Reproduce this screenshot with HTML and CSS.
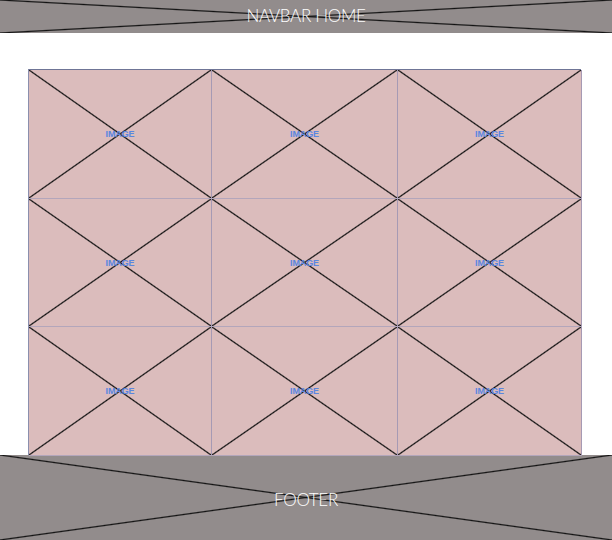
FILE: index.html
```html
<!DOCTYPE html>
<html>
<head>
<meta charset="utf-8">
<link rel="stylesheet" href="styles.css">
</head>
<body>
<header class="navbar xbox"><span class="label">NAVBAR HOME</span></header>
<main class="gallery">
  <div class="cell xbox"><span class="img-label">IMAGE</span></div>
  <div class="cell xbox"><span class="img-label">IMAGE</span></div>
  <div class="cell xbox"><span class="img-label">IMAGE</span></div>
  <div class="cell xbox"><span class="img-label">IMAGE</span></div>
  <div class="cell xbox"><span class="img-label">IMAGE</span></div>
  <div class="cell xbox"><span class="img-label">IMAGE</span></div>
  <div class="cell xbox"><span class="img-label">IMAGE</span></div>
  <div class="cell xbox"><span class="img-label">IMAGE</span></div>
  <div class="cell xbox"><span class="img-label">IMAGE</span></div>
</main>
<footer class="footer xbox"><span class="label">FOOTER</span></footer>
</body>
</html>
```
FILE: styles.css
```css
html, body {
  margin: 0;
  padding: 0;
  background: #ffffff;
  width: 612px;
  height: 540px;
  overflow: hidden;
}
body {
  font-family: Lato, "Open Sans", sans-serif;
}
.xbox {
  background-image:
    linear-gradient(to top right, transparent calc(50% - 1.2px), #111 50%, transparent calc(50% + 1.2px)),
    linear-gradient(to bottom right, transparent calc(50% - 1.2px), #111 50%, transparent calc(50% + 1.2px));
  display: flex;
  align-items: center;
  justify-content: center;
}
.navbar {
  height: 33px;
  background-color: #928c8c;
}
.label {
  color: #ffffff;
  font-weight: 300;
  font-size: 17px;
  letter-spacing: -0.3px;
}
.navbar .label {
  margin-top: -2px;
}
.gallery {
  margin: 36px 0 0 28px;
  width: 553px;
  height: 386px;
  display: grid;
  grid-template-columns: 183px 186px 184px;
  grid-template-rows: 129px 128px 129px;
  box-sizing: border-box;
  border-top: 1px solid #6f7596;
  border-left: 1px solid #8a8fae;
}
.cell {
  background-color: #dbbcbc;
  border-right: 1px solid #a69ab4;
  border-bottom: 1px solid #b3a6bb;
  box-sizing: border-box;
}
.img-label {
  color: #5a86e0;
  font-family: "Liberation Sans", sans-serif;
  font-size: 9px;
  font-weight: 700;
  letter-spacing: -0.1px;
}
.footer {
  height: 85px;
  background-color: #928c8c;
}
.footer .label {
  margin-top: 3px;
}
```
